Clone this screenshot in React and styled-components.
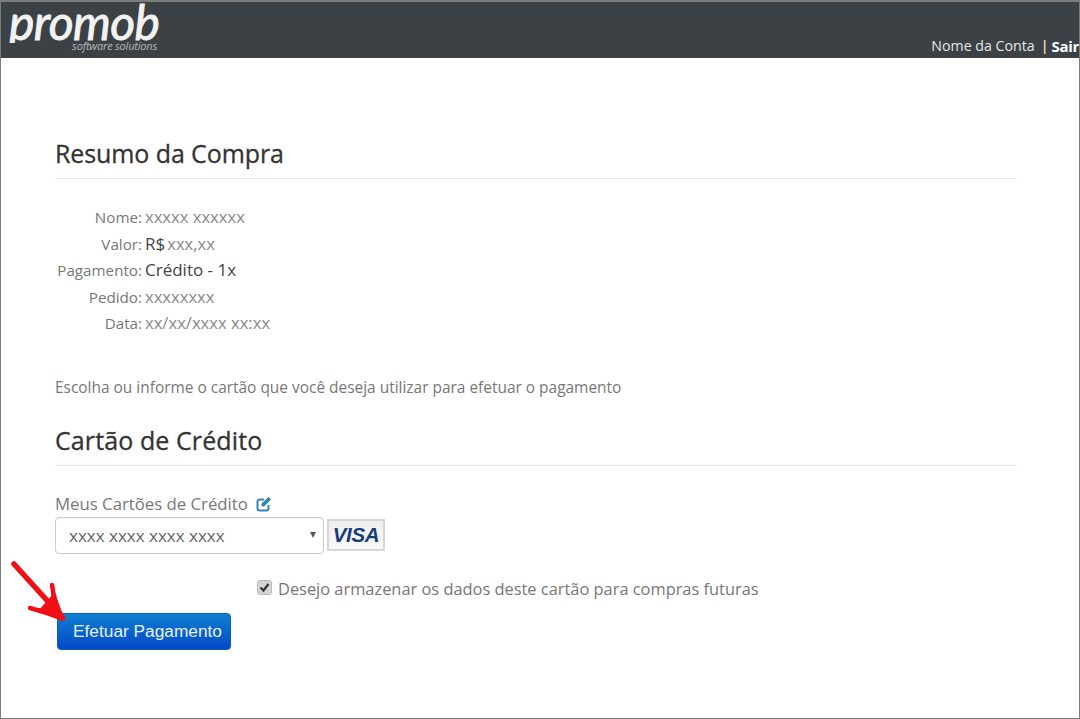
import React from "react";
import styled, { createGlobalStyle } from "styled-components";

const Global = createGlobalStyle`
  html, body { margin: 0; padding: 0; background: #fff; }
  body { font-family: "Open Sans", "Noto Sans", sans-serif; color: #777; }
`;

const Frame = styled.div`
  width: 1080px; height: 719px; box-sizing: border-box; overflow: hidden;
  border: 1px solid #7d7d7d; border-top-width: 2px; background: #fff;
`;
const Header = styled.header`
  height: 56px; background: #3c4145; display: flex; justify-content: space-between; align-items: flex-start;
`;
const Logo = styled.div`
  width: 150px; display: flex; flex-direction: column; align-items: flex-end; margin-left: 8px; color: #f2f3f3;
`;
const LogoName = styled.div`
  align-self: flex-start; font-family: "Lato", sans-serif; font-style: italic; font-weight: 400; font-size: 48px; line-height: 33px;
  letter-spacing: -0.6px; white-space: nowrap; margin-top: 3px; -webkit-text-stroke: 0.9px #f2f3f3;
  clip-path: inset(-12px -12px -5px -12px);
`;
const LogoSub = styled.div`
  font-family: "Open Sans", sans-serif; font-style: italic; font-size: 11px; line-height: 10px; color: #b5b8ba;
  margin-top: 3px; padding-right: 2px; letter-spacing: -0.2px; white-space: nowrap;
`;
const Account = styled.div`
  margin-top: 35px; display: flex; align-items: center; font-size: 14.2px; line-height: 18px; color: #e6e7e8; white-space: nowrap;
`;
const Sep = styled.span`
  margin-left: 6px; margin-right: 3px; font-weight: 600; color: #f0e6d8;
`;
const Exit = styled.b`
  font-weight: 700; color: #fff; font-size: 15px; letter-spacing: -0.3px;
`;
const Main = styled.main`
  padding: 78px 62px 0 54px; display: flex; flex-direction: column;
`;
const Title = styled.h2`
  margin: 0; font-size: 25px; font-weight: 400; line-height: 34px; color: #333; -webkit-text-stroke: 0.3px #333; letter-spacing: -0.1px;
  padding-bottom: 8px; border-bottom: 1px solid #e4e4e4;
`;
const Summary = styled.dl`
  margin: 25px 0 0; display: grid; grid-template-columns: 87px 1fr; column-gap: 3px; font-size: 15.2px; line-height: 26.5px;
`;
const Label = styled.dt`
  text-align: right; color: #777; white-space: nowrap;
`;
const Value = styled.dd`
  margin: 0; font-size: ${p => (p.$dark ? "17px" : "16.6px")}; color: ${p => (p.$dark ? "#444" : "#888")}; white-space: nowrap;
`;
const Small = styled.span`
  font-size: 16.6px; color: #888; margin-left: 2px;
`;
const Hint = styled.p`
  margin: 40px 0 0; font-size: 15.45px; line-height: 20px; color: #777;
`;
const CardTitle = styled(Title)`
  margin-top: 26px; letter-spacing: 0.1px;
`;
const CardLabel = styled.div`
  margin-top: 27px; display: flex; align-items: center; gap: 8px; font-size: 16.75px; line-height: 22px; color: #777;
`;
const CardRow = styled.div`
  display: flex; align-items: center; gap: 3px; margin-top: 2px;
`;
const Select = styled.div`
  width: 269px; height: 37px; box-sizing: border-box; border: 1px solid #ccc; border-radius: 4px;
  display: flex; align-items: center; justify-content: space-between; padding: 0 7px 0 13px;
  font-size: 17px; color: #666; box-shadow: inset 0 1px 1px rgba(0,0,0,.05);
`;
const Caret = styled.span`
  width: 0; height: 0; border-left: 3px solid transparent; border-right: 3px solid transparent; border-top: 6px solid #555;
`;
const Visa = styled.div`
  width: 58px; height: 32px; box-sizing: border-box; border: 2px solid #d6d6d6; background: linear-gradient(#eee, #f8f8f8);
  display: flex; align-items: center; justify-content: center;
  font-family: "Liberation Sans", sans-serif; font-style: italic; font-weight: 700; font-size: 20.5px; color: #1a3a7c; letter-spacing: -0.3px;
`;
const CheckRow = styled.label`
  margin-top: 24px; margin-left: 202px; display: flex; align-items: center; gap: 6px; font-size: 16.4px; line-height: 22px; color: #777;
`;
const Box = styled.span`
  width: 15px; height: 15px; box-sizing: border-box; border-radius: 3px; background: #d4d4d4; border: 1px solid #bbb;
  display: flex; align-items: center; justify-content: center; margin-top: -3px;
`;
const ButtonWrap = styled.div`
  position: relative; margin-top: 13px; margin-left: 2px; align-self: flex-start;
`;
const PayButton = styled.button`
  display: block; width: 174px; height: 37px; border: 1px solid #0a5fb8; border-radius: 4px; padding: 1px 0 0 7px;
  background: linear-gradient(#0f7fd0, #0348c8); color: #eaf3fb;
  font-family: "Liberation Sans", sans-serif; font-size: 17.3px;
`;
const Arrow = styled.svg`
  position: absolute; left: -47px; top: -53px;
`;

export default function App() {
  return (
    <Frame>
      <Global />
      <Header>
        <Logo>
          <LogoName>promob</LogoName>
          <LogoSub>software solutions</LogoSub>
        </Logo>
        <Account>
          Nome da Conta<Sep>|</Sep><Exit>Sair</Exit>
        </Account>
      </Header>
      <Main>
        <Title>Resumo da Compra</Title>
        <Summary>
          <Label>Nome:</Label><Value>xxxxx xxxxxx</Value>
          <Label>Valor:</Label><Value $dark>R$<Small>xxx,xx</Small></Value>
          <Label>Pagamento:</Label><Value $dark>Crédito - 1x</Value>
          <Label>Pedido:</Label><Value>xxxxxxxx</Value>
          <Label>Data:</Label><Value>xx/xx/xxxx xx:xx</Value>
        </Summary>
        <Hint>Escolha ou informe o cartão que você deseja utilizar para efetuar o pagamento</Hint>
        <CardTitle>Cartão de Crédito</CardTitle>
        <CardLabel>
          Meus Cartões de Crédito
          <svg width="16" height="16" viewBox="0 0 16 16" fill="none" stroke="#2f86b5" strokeWidth="2">
            <path d="M12.5 9v3.5a2 2 0 0 1-2 2h-7a2 2 0 0 1-2-2v-7a2 2 0 0 1 2-2H8" />
            <path d="M6 7.5 12.5 1.5 14.5 3.5 8.2 10H6z" fill="#2f86b5" strokeWidth="1" />
          </svg>
        </CardLabel>
        <CardRow>
          <Select>xxxx xxxx xxxx xxxx<Caret /></Select>
          <Visa>VISA</Visa>
        </CardRow>
        <CheckRow>
          <Box>
            <svg width="11" height="11" viewBox="0 0 11 11" fill="none" stroke="#333" strokeWidth="2.2">
              <path d="M1.5 5.5 4.5 8.5 9.5 2" />
            </svg>
          </Box>
          Desejo armazenar os dados deste cartão para compras futuras
        </CheckRow>
        <ButtonWrap>
          <PayButton>Efetuar Pagamento</PayButton>
          <Arrow width="60" height="70" viewBox="0 0 60 70" fill="none" stroke="#f00f14" strokeLinecap="round" strokeLinejoin="round">
            <path d="M4 4 L52 57" strokeWidth="5.5" />
            <path d="M42 25 Q44 42 53 59 Q36 52 20 48" strokeWidth="4.5" />
            <path d="M43 34 L51 57 L29 50" strokeWidth="4" fill="#f00f14" />
          </Arrow>
        </ButtonWrap>
      </Main>
    </Frame>
  );
}
